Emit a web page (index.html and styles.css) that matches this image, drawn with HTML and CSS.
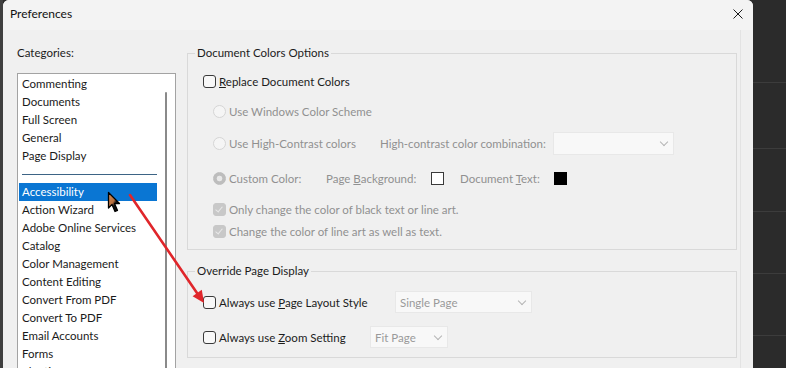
FILE: index.html
```html
<!DOCTYPE html>
<html lang="en">
<head>
    <meta charset="UTF-8">
    <meta name="viewport" content="width=device-width, initial-scale=1.0">
    <title>Preferences</title>
    <link rel="stylesheet" href="styles.css">
</head>
<body>
    <div class="screen">
        <div class="edge"></div>

        <div class="dialog">
            <div class="titlebar">
                <span class="title">Preferences</span>
                <svg class="close" width="10" height="10" viewBox="0 0 10 10">
                    <path d="M0.5 0.5 L9.5 9.5 M9.5 0.5 L0.5 9.5" stroke="#1a1a1a" stroke-width="1" fill="none"/>
                </svg>
            </div>

            <div class="content">
                <!-- Categories list -->
                <div class="categories">
                    <div class="cat-label">Categories:</div>
                    <div class="listbox">
                        <ul class="items">
                            <li>Commenting</li>
                            <li>Documents</li>
                            <li>Full Screen</li>
                            <li>General</li>
                            <li>Page Display</li>
                            <li class="separator"><span></span></li>
                            <li class="selected">Accessibility</li>
                            <li>Action Wizard</li>
                            <li>Adobe Online Services</li>
                            <li>Catalog</li>
                            <li>Color Management</li>
                            <li>Content Editing</li>
                            <li>Convert From PDF</li>
                            <li>Convert To PDF</li>
                            <li>Email Accounts</li>
                            <li>Forms</li>
                            <li>Identity</li>
                        </ul>
                        <div class="scrollbar"><div class="thumb"></div></div>
                    </div>
                </div>

                <!-- Settings panel -->
                <div class="panel">
                    <fieldset class="group colors">
                        <legend>Document Colors Options</legend>
                        <div class="rows">
                            <div class="row">
                                <span class="check"></span>
                                <span class="text"><u>R</u>eplace Document Colors</span>
                            </div>
                            <div class="row sub">
                                <span class="radio"></span>
                                <span class="text muted">Use Windows Color Scheme</span>
                            </div>
                            <div class="row sub">
                                <span class="opt w-contrast">
                                    <span class="radio"></span>
                                    <span class="text muted">Use High-Contrast colors</span>
                                </span>
                                <span class="text muted w-combo">High-contrast color combination:</span>
                                <span class="select combo"><span class="value"></span><span class="chevron"></span></span>
                            </div>
                            <div class="row sub">
                                <span class="opt w-custom">
                                    <span class="radio on"></span>
                                    <span class="text muted">Custom Color:</span>
                                </span>
                                <span class="text muted w-bg">Page <u>B</u>ackground:</span>
                                <span class="swatch white"></span>
                                <span class="text muted w-doc">Document <u>T</u>ext:</span>
                                <span class="swatch black"></span>
                            </div>
                            <div class="row sub">
                                <span class="check off-on"></span>
                                <span class="text muted">Only change the color of black text or line art.</span>
                            </div>
                            <div class="row sub">
                                <span class="check off-on"></span>
                                <span class="text muted">Change the color of line art as well as text.</span>
                            </div>
                        </div>
                    </fieldset>

                    <fieldset class="group override">
                        <legend>Override Page Display</legend>
                        <div class="rows">
                            <div class="row">
                                <span class="opt w-layout">
                                    <span class="check"></span>
                                    <span class="text">Always use <u>P</u>age Layout Style</span>
                                </span>
                                <span class="select layout"><span class="value">Single Page</span><span class="chevron"></span></span>
                            </div>
                            <div class="row">
                                <span class="opt w-zoom">
                                    <span class="check"></span>
                                    <span class="text">Always use <u>Z</u>oom Setting</span>
                                </span>
                                <span class="select zoom"><span class="value">Fit Page</span><span class="chevron"></span></span>
                            </div>
                        </div>
                    </fieldset>
                </div>
            </div>
        </div>

        <div class="backdrop">
            <div class="tile"></div>
            <div class="tile"></div>
            <div class="tile"></div>
            <div class="tile"></div>
            <div class="tile"></div>
            <div class="tile"></div>
        </div>

        <!-- Annotation: red arrow and mouse cursor -->
        <svg class="annotation" width="786" height="368" viewBox="0 0 786 368">
            <defs>
                <linearGradient id="cur" x1="0" y1="0" x2="1" y2="1">
                    <stop offset="0" stop-color="#d58b52"/>
                    <stop offset="0.45" stop-color="#b87040"/>
                    <stop offset="0.6" stop-color="#111"/>
                </linearGradient>
            </defs>
            <line x1="130" y1="195" x2="197" y2="293" stroke="#e0262b" stroke-width="2.6" stroke-linecap="round"/>
            <polygon points="204,303 192.6,296.2 201.8,289.8" fill="#e0262b"/>
            <path d="M108.5 192.5 L108.5 208 L112 204.5 L115 211.5 L117.5 210.5 L114.5 203.5 L119.5 203.5 Z" fill="url(#cur)" stroke="#000" stroke-width="1.3" stroke-linejoin="round"/>
        </svg>
    </div>
</body>
</html>
```

FILE: styles.css
```css
* {
    box-sizing: border-box;
}

body {
    margin: 0;
    padding: 0;
    background-color: #2b2b2b;
    font-family: Lato, "Open Sans", sans-serif;
    font-size: 11.5px;
    color: #1c1c1c;
}

.screen {
    position: relative;
    width: 786px;
    height: 368px;
    display: flex;
    overflow: hidden;
    background-color: #2b2b2b;
}

.edge {
    width: 3px;
    background-color: #3f3f3f;
}

/* Dialog window */
.dialog {
    width: 750px;
    display: flex;
    flex-direction: column;
    background-color: #f0f0f0;
    border-radius: 6px 6px 0 0;
    overflow: hidden;
}

.titlebar {
    height: 30px;
    flex-shrink: 0;
    display: flex;
    align-items: center;
    justify-content: space-between;
    padding: 0 10px 3px 7px;
    background-color: #f3f3f3;
}

.title {
    font-size: 12px;
    color: #111;
}

.content {
    display: flex;
    flex: 1;
    padding-left: 14px;
}

/* Categories */
.categories {
    width: 159px;
    padding-top: 15px;
}

.cat-label {
    line-height: 16px;
    margin-bottom: 12px;
}

.listbox {
    display: flex;
    height: 320px;
    background-color: #fff;
    border: 1px solid #a3a3a3;
}

.items {
    list-style: none;
    margin: 0 0 0 1px;
    padding: 1px 0 0;
    width: 138px;
}

.items li {
    height: 18px;
    line-height: 18px;
    padding-left: 3px;
    white-space: nowrap;
    color: #1a1a1a;
}

.items li.selected {
    background-color: #0a76d3;
    color: #fff;
}

.items li.separator {
    display: flex;
    align-items: center;
}

.items li.separator span {
    display: block;
    width: 135px;
    height: 1px;
    background-color: #3d6485;
}

.scrollbar {
    flex: 1;
    padding: 18px 0 0 8px;
}

.thumb {
    width: 2px;
    height: 100%;
    border-radius: 1px;
    background-color: #8a8a8a;
}

/* Settings panel */
.panel {
    margin-left: 11px;
    width: 554px;
    padding: 15px 3px 0 0;
    border-right: 1px solid #e3e3e3;
}

.group {
    margin: 0;
    padding: 0;
    border: 1px solid #d9d9d9;
}

.group legend {
    margin-left: 7px;
    padding: 0 2px;
    line-height: 16px;
    color: #1c1c1c;
}

.colors .rows {
    display: grid;
    grid-template-rows: 30px 30px 34px 36px 26px 18px;
    padding: 5px 0 9px;
}

.override {
    margin-top: 13px;
}

.override .rows {
    display: grid;
    grid-template-rows: 34px 36px;
    padding: 6px 0 2px;
}

.row {
    display: flex;
    align-items: center;
    padding-left: 15px;
}

.row.sub {
    padding-left: 25px;
}

.opt {
    display: flex;
    align-items: center;
}

.text {
    white-space: nowrap;
}

.muted {
    color: #909090;
}

.w-contrast { width: 167px; }
.w-combo { width: 173px; }
.w-custom { width: 113px; }
.w-bg { width: 105px; }
.w-doc { width: 94px; }
.w-layout { width: 192px; }
.w-zoom { width: 167px; }

/* Checkboxes and radios */
.check {
    width: 13px;
    height: 13px;
    flex-shrink: 0;
    margin-right: 3px;
    border: 1px solid #3a3a3a;
    border-radius: 3px;
    background-color: #f8f8f8;
}

.check.off-on {
    position: relative;
    border-color: #c8c8c8;
    background-color: #c8c8c8;
}

.check.off-on::after {
    content: "";
    position: absolute;
    left: 3px;
    top: 1px;
    width: 3px;
    height: 6px;
    border: solid #e9e9e9;
    border-width: 0 1.5px 1.5px 0;
    transform: rotate(40deg);
}

.radio {
    width: 13px;
    height: 13px;
    flex-shrink: 0;
    margin-right: 3px;
    border: 1px solid #d5d5d5;
    border-radius: 50%;
    background-color: #f5f5f5;
}

.radio.on {
    border-color: #bdbdbd;
    background: radial-gradient(circle, #e8e8e8 2.5px, #bdbdbd 3.2px);
}

.swatch {
    width: 13px;
    height: 13px;
    flex-shrink: 0;
}

.swatch.white {
    border: 1px solid #3a3a3a;
    background-color: #fff;
    margin-right: 16px;
}

.swatch.black {
    background-color: #000;
}

/* Drop-downs */
.select {
    display: flex;
    align-items: center;
    justify-content: space-between;
    height: 22px;
    padding: 0 6px 0 4px;
    background-color: #f8f8f8;
    border: 1px solid #e8e8e8;
    color: #9a9a9a;
}

.select.combo {
    width: 121px;
    height: 23px;
}

.select.layout {
    width: 137px;
}

.select.zoom {
    width: 78px;
}

.chevron {
    width: 6px;
    height: 6px;
    margin-bottom: 3px;
    border: solid #b5b5b5;
    border-width: 0 1px 1px 0;
    transform: rotate(45deg);
}

/* Dark app behind the dialog */
.backdrop {
    flex: 1;
    display: grid;
    grid-template-rows: 83px 66px 63px 62px 62px 1fr;
    background-color: #2b2b2b;
}

.tile {
    border-bottom: 1px solid #3c3c3c;
}

.tile:last-child {
    border-bottom: none;
}

.annotation {
    position: absolute;
    left: 0;
    top: 0;
    pointer-events: none;
}
```
